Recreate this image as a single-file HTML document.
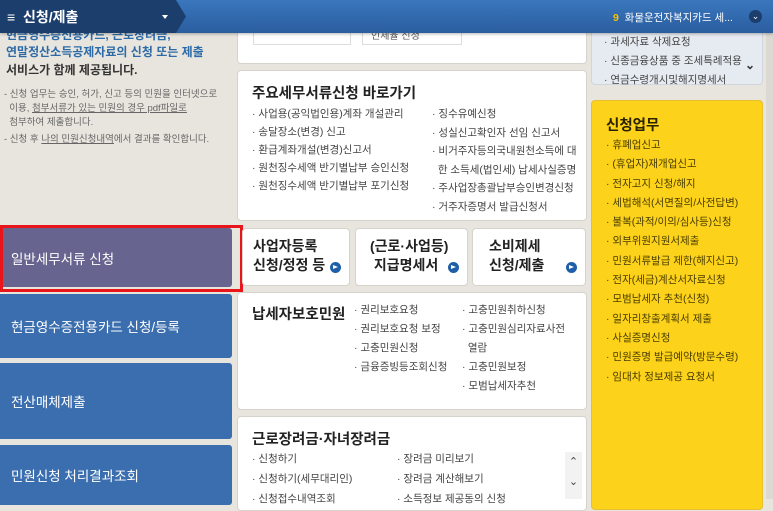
<!DOCTYPE html>
<html><head><meta charset="utf-8"><style>
*{margin:0;padding:0;box-sizing:border-box}
body{width:773px;height:499px;overflow:hidden;background:#e8e5de;font-family:"Liberation Sans","Noto Sans CJK KR",sans-serif;position:relative;color:#333}
.a{position:absolute}
.box{position:absolute;background:#fff;border:1px solid #d6d3cc;border-radius:4px}
.li{font-size:10.5px;color:#444;line-height:18px;white-space:nowrap}
.nav{position:absolute;left:0;width:232px;color:#fff;font-size:13.5px;padding-left:11px;display:flex;align-items:center;border-radius:0 3px 3px 0}
.btn{position:absolute;top:228px;height:58px;background:#fff;border:1px solid #d6d3cc;border-radius:4px;font-size:14px;font-weight:bold;color:#222;line-height:19px;padding:8px 0 0 10px}
.dot{position:absolute;width:11px;height:11px;border-radius:50%;background:#1f5fa8;right:8px;bottom:12px}
.dot:after{content:"";position:absolute;left:3px;top:3px;border-left:5px solid #fff;border-top:2.5px solid transparent;border-bottom:2.5px solid transparent}
.y{font-size:10.5px;color:#4a3e00;line-height:19.3px;white-space:nowrap}
</style></head><body>
<!-- left text -->
<div class="a" style="left:6px;top:27px;font-size:12px;line-height:17px;font-weight:bold;color:#2c6aa8">현금영수증전용카드, 근로장려금,<br>연말정산소득공제자료의 신청 또는 제출</div>
<div class="a" style="left:6px;top:61px;font-size:12px;font-weight:bold;color:#333">서비스가 함께 제공됩니다.</div>
<div class="a" style="left:4px;top:88px;font-size:9.5px;line-height:14px;color:#666">- 신청 업무는 승인, 허가, 신고 등의 민원을 인터넷으로<br>&nbsp;&nbsp;이용, <u>첨부서류가 있는 민원의 경우 pdf파일로</u><br>&nbsp;&nbsp;첨부하여 제출합니다.</div>
<div class="a" style="left:4px;top:131px;font-size:9.5px;color:#666">- 신청 후 <u>나의 민원신청내역</u>에서 결과를 확인합니다.</div>
<!-- nav -->
<div class="nav" style="top:228px;height:59px;background:#67658f">일반세무서류 신청</div>
<div class="a" style="left:0;top:225px;width:243px;height:67px;border:3px solid #e8161b"></div>
<div class="nav" style="top:294px;height:64px;background:#3b6eae">현금영수증전용카드 신청/등록</div>
<div class="nav" style="top:363px;height:76px;background:#3b6eae">전산매체제출</div>
<div class="nav" style="top:445px;height:60px;background:#3b6eae">민원신청 처리결과조회</div>
<!-- middle -->
<div class="box" style="left:237px;top:-10px;width:350px;height:74px"></div>
<div class="a" style="left:253px;top:0;width:98px;height:45px;border:1px solid #ddd;background:#fff"></div>
<div class="a" style="left:362px;top:0;width:100px;height:45px;border:1px solid #ddd;background:#fff;font-size:10px;padding:26px 0 0 8px;color:#555">인세율 신청</div>
<div class="box" style="left:237px;top:70px;width:350px;height:151px"></div>
<div class="a" style="left:252px;top:82px;font-size:14.5px;font-weight:bold;color:#222">주요세무서류신청 바로가기</div>
<div class="a li" style="left:252px;top:105px">· 사업용(공익법인용)계좌 개설관리<br>· 송달장소(변경) 신고<br>· 환급계좌개설(변경)신고서<br>· 원천징수세액 반기별납부 승인신청<br>· 원천징수세액 반기별납부 포기신청</div>
<div class="a li" style="left:432px;top:105px;line-height:18.5px">· 징수유예신청<br>· 성실신고확인자 선임 신고서<br>· 비거주자등의국내원천소득에 대<br>&nbsp;&nbsp;한 소득세(법인세) 납세사실증명<br>· 주사업장총괄납부승인변경신청<br>· 거주자증명서 발급신청서</div>
<div class="btn" style="left:242px;width:108px">사업자등록<br>신청/정정 등<span class="dot"></span></div>
<div class="btn" style="left:355px;width:113px;padding-left:14px">(근로·사업등)<br>&nbsp;지급명세서<span class="dot"></span></div>
<div class="btn" style="left:472px;width:114px;padding-left:16px">소비제세<br>신청/제출<span class="dot"></span></div>
<div class="box" style="left:237px;top:292px;width:350px;height:118px"></div>
<div class="a" style="left:252px;top:303px;font-size:14.5px;font-weight:bold;color:#222">납세자보호민원</div>
<div class="a li" style="left:354px;top:301px;line-height:19px">· 권리보호요청<br>· 권리보호요청 보정<br>· 고충민원신청<br>· 금융증빙등조회신청</div>
<div class="a li" style="left:462px;top:301px;line-height:19px">· 고충민원취하신청<br>· 고충민원심리자료사전<br>&nbsp;&nbsp;열람<br>· 고충민원보정<br>· 모범납세자추천</div>
<div class="box" style="left:237px;top:416px;width:350px;height:95px"></div>
<div class="a" style="left:252px;top:428px;font-size:14.5px;font-weight:bold;color:#222">근로장려금·자녀장려금</div>
<div class="a li" style="left:252px;top:449px;line-height:20px">· 신청하기<br>· 신청하기(세무대리인)<br>· 신청접수내역조회</div>
<div class="a li" style="left:397px;top:449px;line-height:20px">· 장려금 미리보기<br>· 장려금 계산해보기<br>· 소득정보 제공동의 신청</div>
<div class="a" style="left:565px;top:452px;width:17px;height:47px;background:#f2f2f2;font-size:11px;color:#444;text-align:center;line-height:20px">⌃<br>⌄</div>
<!-- right -->
<div class="a" style="left:591px;top:-10px;width:172px;height:95px;background:#e6ebf2;border:1px solid #d0d6de;border-radius:4px"></div>
<div class="a li" style="left:604px;top:33px;line-height:19px;color:#444">· 과세자료 삭제요청<br>· 신종금융상품 중 조세특례적용<br>· 연금수령개시및해지명세서</div>
<div class="a" style="left:745px;top:58px;font-size:12px;color:#333;font-weight:bold">⌄</div>
<div class="a" style="left:591px;top:100px;width:172px;height:410px;background:#fdd21a;border:1px solid #e6c030;border-radius:4px"></div>
<div class="a" style="left:606px;top:114px;font-size:14.5px;font-weight:bold;color:#2a2200">신청업무</div>
<div class="a y" style="left:606px;top:136px">· 휴폐업신고<br>· (휴업자)재개업신고<br>· 전자고지 신청/해지<br>· 세법해석(서면질의/사전답변)<br>· 불복(과적/이의/심사등)신청<br>· 외부위원지원서제출<br>· 민원서류발급 제한(해지신고)<br>· 전자(세금)계산서자료신청<br>· 모범납세자 추천(신청)<br>· 일자리창출계획서 제출<br>· 사실증명신청<br>· 민원증명 발급예약(방문수령)<br>· 임대차 정보제공 요청서</div>
<div class="a" style="left:766px;top:0;width:7px;height:499px;background:#dcd9d2"></div>
<!-- header -->
<div class="a" style="left:0;top:0;width:773px;height:33px;background:linear-gradient(#3a76bd,#2a5e9f);box-shadow:0 1px 3px rgba(0,0,0,.3)"></div>
<svg class="a" style="left:0;top:0" width="190" height="33"><polygon points="0,0 176,0 186,16.5 176,33 0,33" fill="#1c3e6c"/></svg>
<div class="a" style="left:7px;top:7px;font-size:14px;color:#fff;font-weight:bold">≡&nbsp; 신청/제출</div>
<div class="a" style="left:162px;top:15px;border-top:4px solid #fff;border-left:3.5px solid transparent;border-right:3.5px solid transparent"></div>
<div class="a" style="left:613px;top:10px;font-size:10.5px;color:#fff"><span style="color:#f5c400;font-weight:bold">9</span>&nbsp; 화물운전자복지카드 세...</div>
<div class="a" style="left:749px;top:10px;width:13px;height:13px;border-radius:50%;background:#1c3e6c;color:#fff;font-size:9px;text-align:center;line-height:12px">⌄</div>
</body></html>
